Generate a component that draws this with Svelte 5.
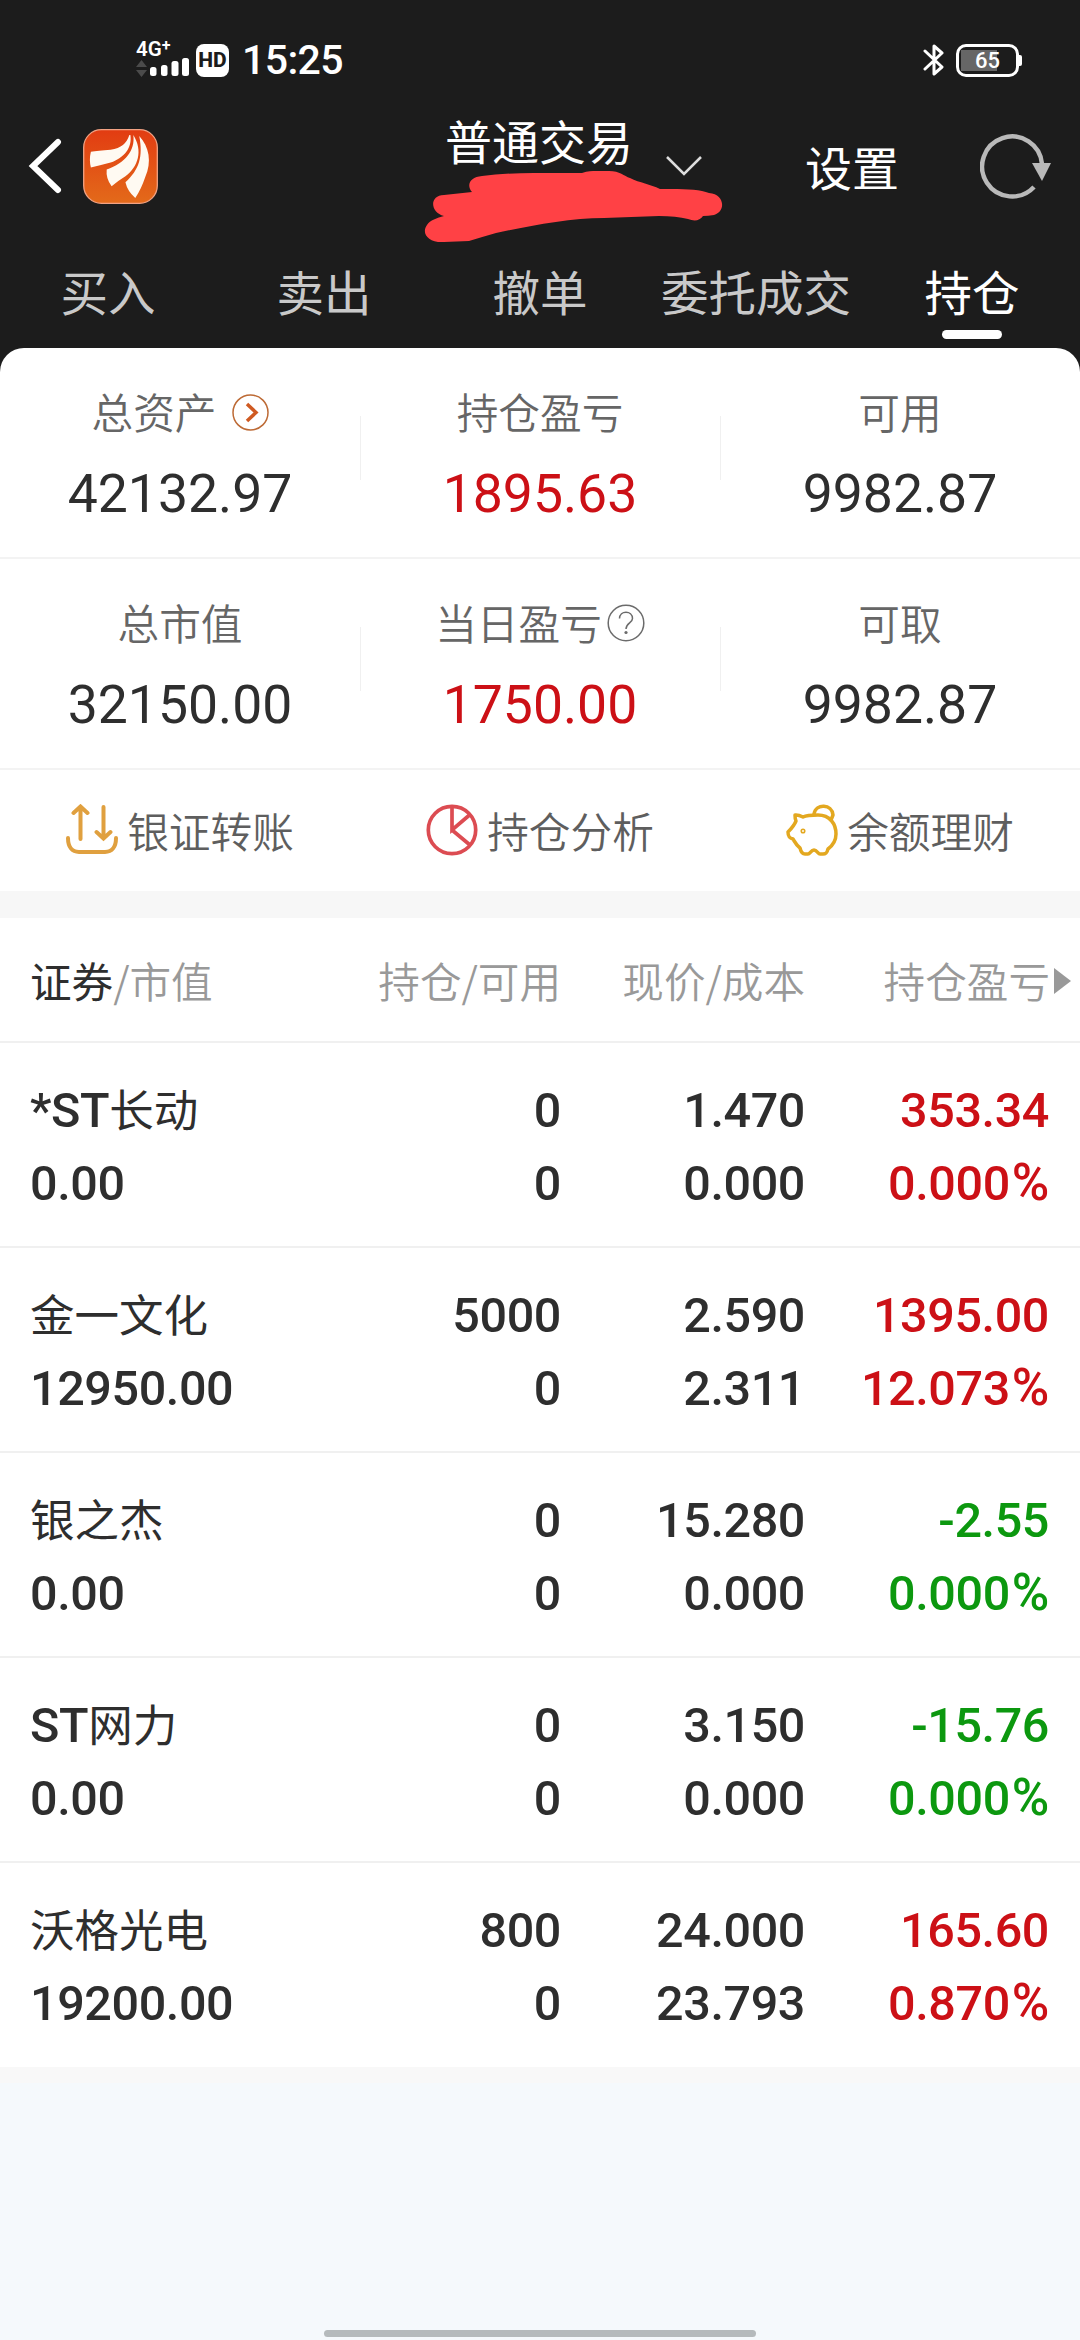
<script lang="ts">
  type Tone = 'up' | 'down';

  const tabs = ['买入', '卖出', '撤单', '委托成交', '持仓'];
  const activeTab = '持仓';

  const summary = [
    [
      { label: '总资产', value: '42132.97', icon: 'more' },
      { label: '持仓盈亏', value: '1895.63', tone: 'up' },
      { label: '可用', value: '9982.87' }
    ],
    [
      { label: '总市值', value: '32150.00' },
      { label: '当日盈亏', value: '1750.00', tone: 'up', icon: 'help' },
      { label: '可取', value: '9982.87' }
    ]
  ];

  const holdings: {
    prefix?: string;
    name: string;
    marketValue: string;
    held: string;
    available: string;
    price: string;
    cost: string;
    profit: string;
    rate: string;
    tone: Tone;
  }[] = [
    { prefix: '*ST', name: '长动', marketValue: '0.00', held: '0', available: '0', price: '1.470', cost: '0.000', profit: '353.34', rate: '0.000', tone: 'up' },
    { name: '金一文化', marketValue: '12950.00', held: '5000', available: '0', price: '2.590', cost: '2.311', profit: '1395.00', rate: '12.073', tone: 'up' },
    { name: '银之杰', marketValue: '0.00', held: '0', available: '0', price: '15.280', cost: '0.000', profit: '-2.55', rate: '0.000', tone: 'down' },
    { prefix: 'ST', name: '网力', marketValue: '0.00', held: '0', available: '0', price: '3.150', cost: '0.000', profit: '-15.76', rate: '0.000', tone: 'down' },
    { name: '沃格光电', marketValue: '19200.00', held: '800', available: '0', price: '24.000', cost: '23.793', profit: '165.60', rate: '0.870', tone: 'up' }
  ];
</script>

<div class="screen">
  <header>
    <div class="status">
      <div class="network">
        <span class="net-type">4G<sup>+</sup></span>
        <svg width="54" height="20" viewBox="0 0 54 20" aria-hidden="true">
          <path d="M0 9 5.500 2l5.500 7zM0 12h11l-5.500 7z" fill="#4b4b4b" />
          <g fill="#fff">
            <rect x="14" y="9" width="6.500" height="9" rx="2.500" />
            <rect x="25" y="7" width="6.500" height="11" rx="2.500" />
            <rect x="35.500" y="3" width="7" height="15" rx="2.500" />
            <rect x="46" y="0" width="7" height="18" rx="2.500" />
          </g>
        </svg>
      </div>
      <span class="hd">HD</span>
      <span class="clock">15:25</span>
      <svg class="bluetooth" width="22" height="34" viewBox="0 0 22 34" aria-hidden="true">
        <path d="M2 8l17 16-8 7V3l8 7L2 26" fill="none" stroke="#fff" stroke-width="3" stroke-linejoin="round" stroke-linecap="round" />
      </svg>
      <div class="battery"><span>65</span></div>
    </div>

    <div class="bar">
      <svg class="back" width="34" height="56" viewBox="0 0 34 56" aria-hidden="true">
        <path d="M30 4 5 28l25 24" fill="none" stroke="#fff" stroke-width="6" stroke-linecap="round" />
      </svg>
      <svg class="logo" width="75" height="75" viewBox="0 0 76 76" aria-hidden="true">
        <defs>
          <linearGradient id="brand" x1="0" y1="0" x2="0" y2="1">
            <stop offset="0" stop-color="#e23c12" />
            <stop offset="1" stop-color="#e36a1a" />
          </linearGradient>
        </defs>
        <rect x="0.700" y="0.700" width="74.600" height="74.600" rx="18" fill="url(#brand)" stroke="#f2a283" stroke-width="1.300" />
        <g fill="#fffaf2">
          <path d="M47 6C44 15 39 19 28 21Q15 22 8 23Q6 31 8 39Q17 37 28 34C42 29 50 19 48 6Z" />
          <path d="M51 6C53 22 43 34 24 41Q23 50 29 58Q35 53 43 48C56 38 61 22 51 6Z" />
          <path d="M57 7C61 28 57 41 43 54Q45 63 53 70Q59 61 63 49C70 33 67 18 57 7Z" />
        </g>
      </svg>
      <div class="title">
        <h1>普通交易</h1>
        <svg class="scribble" width="300" height="72" viewBox="0 0 300 72" aria-hidden="true">
          <path d="M58 5Q80 2 110 2H158C164 0 168 0 172 0H185C196 0 200 5 206 7C216 12 226 13 236 18C252 18 268 18 278 20Q282 21 285 22C301 23 302 41 290 44Q284 45 279 45Q274 52 264 48Q252 45 235 45L180 47C145 47 105 55 72 62Q58 66 45 70L20 71C4 72-3 62 3 54C6 49 13 47 20 45C6 42 5 24 20 24L48 21C42 14 46 6 58 5Z" fill="#ff4145" />
        </svg>
      </div>
      <svg class="caret" width="38" height="22" viewBox="0 0 38 22" aria-hidden="true">
        <path d="M2 2l17 17L36 2" fill="none" stroke="#ddd" stroke-width="2.500" />
      </svg>
      <span class="settings">设置</span>
      <svg class="refresh" width="72" height="66" viewBox="0 0 72 66" aria-hidden="true">
        <path d="M62 31A30 30 0 1 0 54 54" fill="none" stroke="#b9b9b9" stroke-width="4.500" />
        <path d="M52 30h19L62 48z" fill="#b9b9b9" />
      </svg>
    </div>

    <nav>
      {#each tabs as tab}
        <span class:active={tab === activeTab}>{tab}</span>
      {/each}
    </nav>
  </header>

  <section class="summary">
    {#each summary as row}
      <div class="summary-row">
        {#each row as item}
          <div class="stat">
            <div class="label" class:spaced={item.icon === 'more'}>
              <span>{item.label}</span>
              {#if item.icon === 'more'}
                <svg width="37" height="37" viewBox="0 0 37 37" aria-hidden="true">
                  <circle cx="18.500" cy="18.500" r="17.500" fill="none" stroke="#bd6a35" stroke-width="1.500" />
                  <path d="M15 10l9 8.500-9 8.500" fill="none" stroke="#cf5a22" stroke-width="3.500" />
                </svg>
              {:else if item.icon === 'help'}
                <svg width="38" height="38" viewBox="0 0 38 38" aria-hidden="true">
                  <g fill="none" stroke="#6b6b6b" stroke-width="1.500">
                    <circle cx="19" cy="19" r="17.800" />
                    <path d="M12.500 14.500C12.500 6 25.500 6 25.500 14.500C25.500 19 19 19 19 25" />
                  </g>
                  <circle cx="19" cy="28.500" r="1.600" fill="#6b6b6b" />
                </svg>
              {/if}
            </div>
            <div class="value {item.tone ?? ''}">{item.value}</div>
          </div>
        {/each}
      </div>
    {/each}

    <div class="actions">
      <div class="action">
        <svg width="52" height="52" viewBox="0 0 52 52" fill="none" stroke="#e0a03f" stroke-width="4" stroke-linecap="round" aria-hidden="true">
          <path d="M2 34c0 9 4 14 11 14h26c7 0 11-5 11-14" />
          <path d="M14.500 35V3M7.500 9l7-6.500 7 6.500M37.500 3v31M30.500 28l7 6.500 7-6.500" />
        </svg>
        <span>银证转账</span>
      </div>
      <div class="action">
        <svg width="52" height="52" viewBox="0 0 52 52" fill="none" stroke="#dc4c52" stroke-width="3.700" aria-hidden="true">
          <circle cx="26" cy="26" r="23.700" />
          <path d="M26 2v24l17.500-15M26 26l18 15" />
        </svg>
        <span>持仓分析</span>
      </div>
      <div class="action">
        <svg width="52" height="52" viewBox="0 0 52 52" fill="none" stroke="#e3a820" stroke-width="3.500" stroke-linejoin="round" stroke-linecap="round" aria-hidden="true">
          <path d="M10 11c3 0 5 1 7 2 4-2 9-2 15-2 12 0 18 9 18 19 0 7-4 12-8 15-1 4-2 5-5 5h-3c-2 0-3-4-6-4s-4 4-6 4h-3c-3 0-4-2-5-6-4-3-5-6-7-9-4-1-5-3-5-7 3-3 6-6 8-11-1-2-1-4-1-6z" />
          <path d="M28 10C30-1 46 0 47 11l-2 5" />
          <circle cx="17" cy="27" r="0.800" />
        </svg>
        <span>余额理财</span>
      </div>
    </div>
  </section>

  <section class="holdings">
    <div class="row head">
      <span><b>证券</b>/市值</span>
      <span>持仓/可用</span>
      <span>现价/成本</span>
      <span class="last">持仓盈亏<i></i></span>
    </div>
    {#each holdings as h}
      <div class="row">
        <div>
          <p>{h.prefix ?? ''}<span class="name">{h.name}</span></p>
          <p>{h.marketValue}</p>
        </div>
        <div><p>{h.held}</p><p>{h.available}</p></div>
        <div><p>{h.price}</p><p>{h.cost}</p></div>
        <div class={h.tone}><p>{h.profit}</p><p>{h.rate}<span class="percent">%</span></p></div>
      </div>
    {/each}
  </section>

  <footer><div class="home"></div></footer>
</div>

<style>
  :global(body) {
    background: #f5f9fc;
  }
  .screen {
    display: flex;
    flex-direction: column;
    width: 1080px;
    height: 2340px;
    overflow: hidden;
    background: #f5f9fc;
    color: #2e2e2e;
    font-family: Roboto, 'Noto Sans CJK SC', sans-serif;
  }
  header {
    flex: none;
    height: 372px;
    background: #1c1c1c;
    color: #fff;
  }
  .status {
    display: flex;
    align-items: center;
    box-sizing: border-box;
    height: 120px;
    padding: 0 61px 0 136px;
  }
  .network {
    display: flex;
    flex-direction: column;
    width: 60px;
    height: 36px;
  }
  .net-type {
    height: 16px;
    font-size: 20.500px;
    font-weight: 600;
    line-height: 15px;
    white-space: nowrap;
  }
  sup {
    font-size: 16px;
    line-height: 0;
    vertical-align: 5px;
  }
  .hd {
    width: 33px;
    height: 33px;
    border-radius: 8px;
    background: #fff;
    color: #1c1c1c;
    font-size: 21px;
    font-weight: 800;
    line-height: 33px;
    text-align: center;
  }
  .clock {
    flex: 1;
    margin-left: 13px;
    font-size: 41px;
    font-weight: 500;
    letter-spacing: -0.600px;
    line-height: 40px;
  }
  .bluetooth {
    margin-right: 11px;
  }
  .battery {
    position: relative;
    box-sizing: border-box;
    width: 63px;
    height: 33px;
    padding: 2px 3px 3px;
    border: 3px solid #fff;
    border-radius: 10px;
    background: linear-gradient(90deg, #666 36px, transparent 36px) 2px 3px / 53px 21px no-repeat;
    font-size: 22px;
    font-weight: 500;
    line-height: 23px;
    text-align: center;
  }
  .battery::after {
    content: '';
    position: absolute;
    top: 8px;
    right: -6px;
    width: 3px;
    height: 11px;
    border-radius: 0 2px 2px 0;
    background: #fff;
  }
  .bar {
    display: flex;
    align-items: flex-start;
    height: 134px;
    padding-left: 28px;
    font-family: 'Noto Sans CJK SC', sans-serif;
    font-size: 47px;
  }
  .back {
    margin-top: 18px;
  }
  .logo {
    margin: 9px 0 0 21px;
  }
  .title {
    position: relative;
    margin-left: 287px;
  }
  h1 {
    margin: -4px 0 0;
    font-size: 47px;
    font-weight: 400;
    line-height: 48px;
  }
  .scribble {
    position: absolute;
    top: 51px;
    left: -21px;
  }
  .caret {
    margin: 35px 0 0 32px;
  }
  .settings {
    margin: 22px 0 0 102px;
    line-height: 48px;
  }
  .refresh {
    margin: 13px 0 0 81px;
  }
  nav {
    display: grid;
    grid-template-columns: repeat(5, 1fr);
    height: 94px;
    color: #c9c9c9;
    font-family: 'Noto Sans CJK SC', sans-serif;
    font-size: 47.500px;
    line-height: 73px;
    text-align: center;
  }
  nav span {
    position: relative;
    white-space: nowrap;
  }
  nav .active {
    color: #fff;
  }
  nav .active::after {
    content: '';
    position: absolute;
    top: 76px;
    left: 78px;
    width: 60px;
    height: 9px;
    border-radius: 5px;
    background: #fff;
  }
  .summary {
    flex: none;
    height: 543px;
    margin-top: -24px;
    border-radius: 24px 24px 0 0;
    background: #fff;
  }
  .summary-row {
    display: grid;
    grid-template-columns: repeat(3, 1fr);
    box-sizing: border-box;
    height: 211px;
    border-bottom: 2px solid #f3f3f3;
  }
  .stat {
    padding-top: 42px;
    text-align: center;
  }
  .stat + .stat {
    background: linear-gradient(#f0f0f0, #f0f0f0) 0 68px / 1px 64px no-repeat;
  }
  .label {
    display: flex;
    align-items: center;
    justify-content: center;
    gap: 5px;
    height: 44px;
    color: #666;
    font-family: 'Noto Sans CJK SC', sans-serif;
    font-size: 41.700px;
    font-weight: 350;
    line-height: 42px;
  }
  .label span {
    margin-top: -2px;
  }
  .label.spaced {
    gap: 15px;
  }
  .value {
    margin-top: 33px;
    font-size: 53.500px;
    line-height: 54px;
  }
  .up {
    color: #cc1016;
  }
  .down {
    color: #0c980f;
  }
  .actions {
    display: grid;
    grid-template-columns: repeat(3, 1fr);
    height: 119px;
  }
  .action {
    display: flex;
    align-items: center;
    justify-content: center;
    gap: 9px;
    color: #5e5e5e;
    font-family: 'Noto Sans CJK SC', sans-serif;
    font-size: 41.700px;
    font-weight: 350;
    line-height: 52px;
  }
  .holdings {
    flex: none;
    border-top: 27px solid #f7f7f7;
    border-bottom: 16px solid #f8f8f8;
    background: #fff;
  }
  .row {
    display: grid;
    grid-template-columns: 240px 291px 244px 244px;
    box-sizing: border-box;
    height: 205px;
    padding: 31px 0 0 30px;
    border-bottom: 2px solid #f0f0f0;
    font-size: 48.500px;
    font-weight: 500;
    letter-spacing: -0.400px;
    text-align: right;
  }
  .row > :first-child {
    text-align: left;
  }
  .row:last-child {
    height: 204px;
    border-bottom: 0;
  }
  .row p {
    height: 73px;
    margin: 0;
    line-height: 73px;
    white-space: nowrap;
  }
  .name {
    font-family: 'Noto Sans CJK SC', sans-serif;
    font-size: 44.500px;
    font-weight: 400;
    letter-spacing: 0;
    line-height: 1;
  }
  .percent {
    margin-left: 2px;
    font-size: 51px;
    line-height: 1;
  }
  .head {
    height: 125px;
    padding-top: 32px;
    color: #999;
    font-family: 'Noto Sans CJK SC', sans-serif;
    font-size: 41.600px;
    font-weight: 350;
    letter-spacing: 0;
    line-height: 60px;
  }
  b {
    color: #2e2e2e;
    font-weight: 400;
  }
  .last {
    display: flex;
    align-items: center;
    justify-content: flex-end;
    height: 60px;
    margin-right: -22px;
    white-space: nowrap;
  }
  .last i {
    margin: 2px 0 0 4px;
    border: solid transparent;
    border-width: 13px 0 13px 17px;
    border-left-color: #999;
  }
  footer {
    display: flex;
    flex: 1;
    align-items: flex-end;
    justify-content: center;
    padding-bottom: 3px;
  }
  .home {
    width: 432px;
    height: 7px;
    border-radius: 4px;
    background: #b5babc;
  }
</style>
